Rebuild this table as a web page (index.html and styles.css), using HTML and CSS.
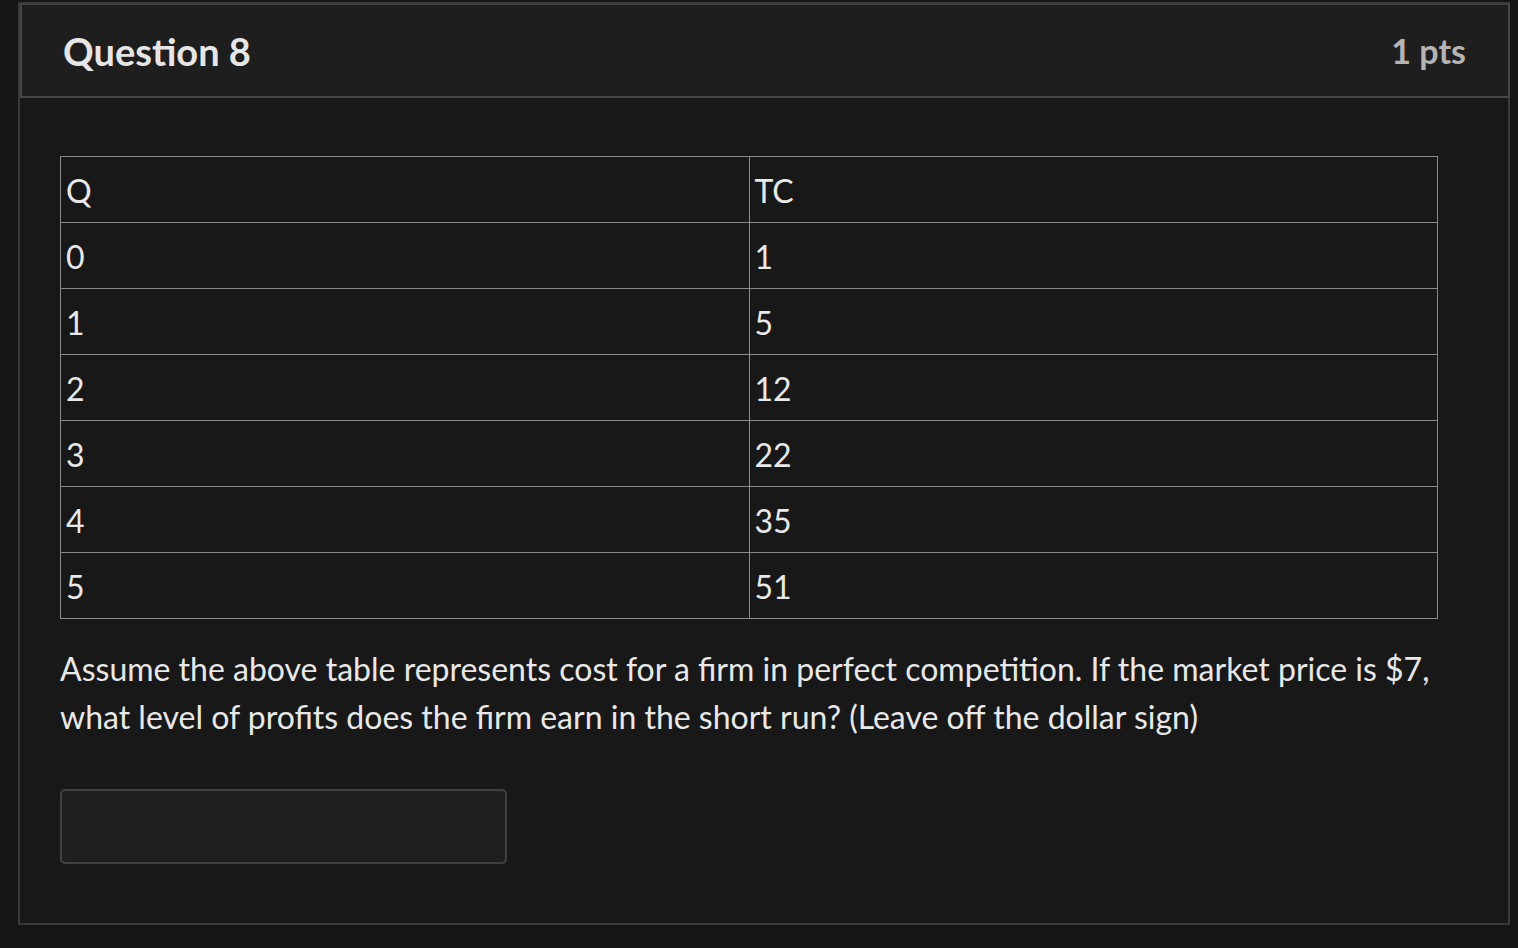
FILE: index.html
```html
<!DOCTYPE html>
<html>
<head>
<meta charset="utf-8">
<link rel="stylesheet" href="styles.css">
</head>
<body>
<div class="card">
  <div class="card-header">
    <h2 class="title">Question 8</h2>
    <span class="pts">1 pts</span>
  </div>
  <div class="card-body">
    <table class="data">
      <tr><td>Q</td><td>TC</td></tr>
      <tr><td>0</td><td>1</td></tr>
      <tr><td>1</td><td>5</td></tr>
      <tr><td>2</td><td>12</td></tr>
      <tr><td>3</td><td>22</td></tr>
      <tr><td>4</td><td>35</td></tr>
      <tr><td>5</td><td>51</td></tr>
    </table>
    <p class="question">Assume the above table represents cost for a firm in perfect competition. If the market price is $7, what level of profits does the firm earn in the short run? (Leave off the dollar sign)</p>
    <input class="answer" type="text">
  </div>
</div>
</body>
</html>
```

FILE: styles.css
```css
html, body {
  margin: 0;
  padding: 0;
  background: #161616;
}
body {
  font-family: Lato, "Open Sans", sans-serif;
  color: #e8e8e8;
  padding: 2px 0 0 18px;
}
.card {
  width: 1492px;
  height: 923px;
  box-sizing: border-box;
  border: 2px solid #3a3a3a;
  background: #181818;
}
.card-header {
  height: 94px;
  box-sizing: border-box;
  border: 2px solid #464646;
  border-top-width: 1px;
  margin: 0 -2px 0 0;
  background: #1e1e1e;
  display: flex;
  align-items: center;
  justify-content: space-between;
  padding: 0 42px 0 41px;
}
.title {
  margin: 0;
  font-size: 38px;
  font-weight: 700;
  color: #e6e6e6;
}
.pts {
  font-size: 34px;
  font-weight: 700;
  color: #b4b4b4;
}
.card-body {
  padding: 58px 69px 0 40px;
}
.data {
  width: 1378px;
  border-collapse: collapse;
  table-layout: fixed;
}
.data td {
  border: 1.5px solid #8a8a8a;
  height: 66px;
  box-sizing: border-box;
  padding: 2px 5px 0;
  font-size: 32px;
  color: #e8e8e8;
  vertical-align: middle;
}
.question {
  margin: 26px 0 0;
  font-size: 32px;
  line-height: 48px;
  color: #e8e8e8;
}
.answer {
  display: block;
  margin-top: 48px;
  width: 447px;
  height: 75px;
  box-sizing: border-box;
  border: 2px solid #404040;
  border-radius: 5px;
  background: #1f1f1f;
  outline: none;
}
```
